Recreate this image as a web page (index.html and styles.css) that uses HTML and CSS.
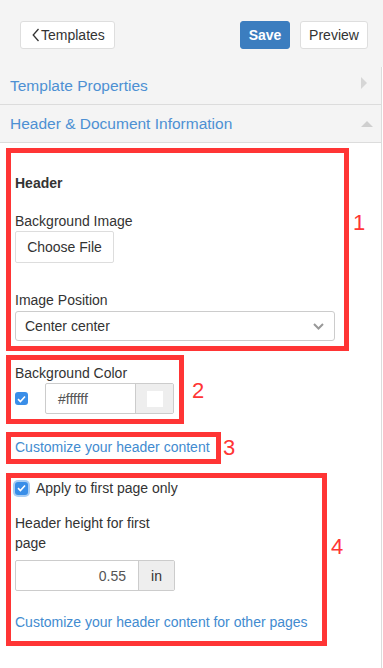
FILE: index.html
```html
<!DOCTYPE html>
<html lang="en">
<head>
    <meta charset="UTF-8">
    <meta name="viewport" content="width=device-width, initial-scale=1.0">
    <title>Template Editor</title>
    <link rel="stylesheet" href="styles.css">
</head>
<body>
    <div class="topbar">
        <button class="btn btn-back">
            <svg width="8" height="14" viewBox="0 0 8 14"><path d="M6.5 1 L1.2 7 L6.5 13" fill="none" stroke="#333" stroke-width="1.3"/></svg>
            Templates
        </button>
        <div class="topbar-actions">
            <button class="btn btn-primary">Save</button>
            <button class="btn btn-preview">Preview</button>
        </div>
    </div>

    <div class="sidebar">
        <div class="accordion-row">
            <span>Template Properties</span>
            <span class="caret caret-right"></span>
        </div>
        <div class="accordion-row">
            <span>Header &amp; Document Information</span>
            <span class="caret caret-up"></span>
        </div>

        <div class="section-body">
            <!-- 1: header image -->
            <div class="note-row">
                <div class="note-box box-header">
                    <h4>Header</h4>
                    <label class="field-label">Background Image</label>
                    <button class="btn-file">Choose File</button>
                    <label class="field-label label-position">Image Position</label>
                    <div class="select">
                        <span>Center center</span>
                        <svg width="11" height="7" viewBox="0 0 11 7"><path d="M1 1 L5.5 5.5 L10 1" fill="none" stroke="#999" stroke-width="2"/></svg>
                    </div>
                </div>
                <span class="note-num num-1">1</span>
            </div>

            <!-- 2: background colour -->
            <div class="note-row row-2">
                <div class="note-box box-color">
                    <label class="field-label">Background Color</label>
                    <div class="color-row">
                        <span class="check">
                            <svg width="9" height="8" viewBox="0 0 9 8"><path d="M1 4.2 L3.4 6.5 L8 1.5" fill="none" stroke="#fff" stroke-width="1.6"/></svg>
                        </span>
                        <div class="input-group color-input">
                            <span class="input-text">#ffffff</span>
                            <span class="addon swatch-addon"><span class="swatch"></span></span>
                        </div>
                    </div>
                </div>
                <span class="note-num num-2">2</span>
            </div>

            <!-- 3: customize link -->
            <div class="note-row row-3">
                <div class="note-box box-link">
                    <a href="#" class="link">Customize your header content</a>
                </div>
                <span class="note-num num-3">3</span>
            </div>

            <!-- 4: first page -->
            <div class="note-row row-4">
                <div class="note-box box-first">
                    <div class="check-row">
                        <span class="check check-focus">
                            <svg width="9" height="8" viewBox="0 0 9 8"><path d="M1 4.2 L3.4 6.5 L8 1.5" fill="none" stroke="#fff" stroke-width="1.6"/></svg>
                        </span>
                        <span>Apply to first page only</span>
                    </div>
                    <div class="height-col">
                        <label class="field-label">Header height for first page</label>
                        <div class="input-group height-input">
                            <span class="input-text align-right">0.55</span>
                            <span class="addon unit-addon">in</span>
                        </div>
                    </div>
                    <a href="#" class="link link-other">Customize your header content for other pages</a>
                </div>
                <span class="note-num num-4">4</span>
            </div>
        </div>
    </div>
</body>
</html>
```

FILE: styles.css
```css
body {
    margin: 0;
    font-family: "Liberation Sans", Arial, sans-serif;
    font-size: 14px;
    color: #333;
    background: #fff;
}

/* top bar */
.topbar {
    height: 67px;
    box-sizing: border-box;
    padding: 21px 15px 0 20px;
    background: #f4f4f4;
    display: flex;
    justify-content: space-between;
    align-items: flex-start;
}
.topbar-actions {
    display: flex;
    gap: 10px;
}
.btn {
    height: 28px;
    box-sizing: border-box;
    border: 1px solid #dedede;
    border-radius: 3px;
    background: #fff;
    color: #333;
    font-family: inherit;
    font-size: 14px;
    padding: 0;
    cursor: pointer;
}
.btn-back {
    width: 95px;
    display: flex;
    align-items: center;
    padding-left: 11px;
    gap: 1px;
}
.btn-primary {
    width: 50px;
    background: #3b7dbf;
    border-color: #3b7dbf;
    color: #fff;
    font-weight: bold;
}
.btn-preview {
    width: 68px;
}

/* sidebar */
.sidebar {
    width: 382px;
    min-height: 601px;
    box-sizing: border-box;
    border-right: 1px solid #dcdcdc;
}
.accordion-row {
    height: 38px;
    box-sizing: border-box;
    border-bottom: 1px solid #dcdcdc;
    background: #f4f4f4;
    padding: 0 8px 0 10px;
    display: flex;
    align-items: center;
    justify-content: space-between;
    font-size: 15.5px;
    color: #4d90d3;
}
.caret {
    width: 0;
    height: 0;
}
.caret-right {
    border-top: 6px solid transparent;
    border-bottom: 6px solid transparent;
    border-left: 6px solid #d6d6d6;
    margin: 0 6px 5px 0;
}
.caret-up {
    border-left: 6px solid transparent;
    border-right: 6px solid transparent;
    border-bottom: 6px solid #cfcfcf;
}

.section-body {
    padding-top: 5px;
}

/* annotated groups */
.note-row {
    display: flex;
    align-items: flex-start;
}
.row-2 { margin-top: 4px; }
.row-3 { margin-top: 8px; }
.row-4 { margin-top: 9px; }
.note-box {
    border: 5px solid #ff3535;
    margin-left: 6px;
    box-sizing: border-box;
}
.note-num {
    font-size: 22px;
    line-height: 22px;
    color: #ff3535;
}
.num-1 { margin: 64px 0 0 4px; }
.num-2 { margin: 25px 0 0 8px; }
.num-3 { margin: 5px 0 0 2px; }
.num-4 { margin: 63px 0 0 4px; }

.field-label {
    display: block;
    line-height: 20px;
}

/* 1 */
.box-header {
    width: 343px;
    padding: 20px 9px 5px 4px;
}
.box-header h4 {
    margin: 0 0 18px;
    font-size: 14px;
    line-height: 20px;
    font-weight: bold;
}
.btn-file {
    display: block;
    width: 99px;
    height: 32px;
    border: 1px solid #ddd;
    border-radius: 2px;
    background: #fff;
    font-family: inherit;
    font-size: 14px;
    color: #333;
    padding: 0;
}
.label-position {
    margin: 27px 0 1px;
}
.select {
    height: 30px;
    box-sizing: border-box;
    border: 1px solid #ccc;
    border-radius: 3px;
    display: flex;
    align-items: center;
    justify-content: space-between;
    padding: 0 10px 0 9px;
}

/* 2 */
.box-color {
    width: 178px;
    padding: 3px 5px 5px 4px;
}
.color-row {
    display: flex;
    align-items: center;
}
.check {
    width: 13px;
    height: 13px;
    border-radius: 3px;
    background: #3a8ee8;
    display: flex;
    align-items: center;
    justify-content: center;
    flex-shrink: 0;
}
.check-focus {
    box-shadow: 0 0 0 2px #a9cdf4;
}
.input-group {
    height: 31px;
    box-sizing: border-box;
    border: 1px solid #ccc;
    border-radius: 2px;
    display: flex;
}
.input-text {
    flex: 1;
    display: flex;
    align-items: center;
    color: #555;
    padding: 0 12px;
}
.align-right {
    justify-content: flex-end;
}
.addon {
    background: #eee;
    border-left: 1px solid #ccc;
    display: flex;
    align-items: center;
    justify-content: center;
}
.color-input {
    width: 129px;
    margin-left: 17px;
}
.swatch-addon {
    width: 37px;
}
.swatch {
    width: 16px;
    height: 16px;
    background: #fff;
}

/* 3 */
.box-link {
    width: 215px;
    padding: 0 4px 2px;
    line-height: 20px;
}
.link {
    color: #428bd0;
    text-decoration: none;
}

/* 4 */
.box-first {
    width: 321px;
    padding: 0 4px 9px;
}
.check-row {
    display: flex;
    align-items: center;
    gap: 8px;
    line-height: 20px;
}
.height-col {
    width: 160px;
    margin-top: 15px;
}
.height-input {
    margin-top: 7px;
}
.unit-addon {
    width: 35px;
}
.link-other {
    display: block;
    margin-top: 21px;
    line-height: 20px;
}
```
